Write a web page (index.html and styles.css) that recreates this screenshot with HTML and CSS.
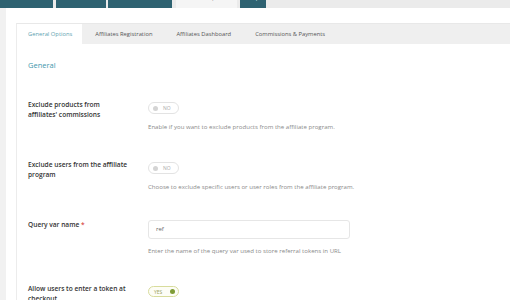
FILE: index.html
```html
<!DOCTYPE html>
<html>
<head>
<meta charset="utf-8">
<link rel="stylesheet" href="styles.css">
</head>
<body>
<nav class="topnav">
  <a class="ttab t1">Dashboard</a>
  <a class="ttab t2">Affiliates</a>
  <a class="ttab t3">Commissions</a>
  <a class="ttab t4 active">General Options</a>
  <a class="ttab t5">Help</a>
</nav>
<div class="wrap">
  <div class="panel">
    <div class="subtabs">
      <span class="stab active">General Options</span>
      <span class="stab">Affiliates Registration</span>
      <span class="stab">Affiliates Dashboard</span>
      <span class="stab">Commissions &amp; Payments</span>
    </div>
    <div class="content">
      <h2 class="heading">General</h2>
      <div class="row">
        <div class="label">Exclude products from affiliates' commissions</div>
        <div class="control">
          <span class="toggle off"><span class="dot"></span><span class="tt">NO</span></span>
          <p class="desc">Enable if you want to exclude products from the affiliate program.</p>
        </div>
      </div>
      <div class="row">
        <div class="label">Exclude users from the affiliate program</div>
        <div class="control">
          <span class="toggle off"><span class="dot"></span><span class="tt">NO</span></span>
          <p class="desc">Choose to exclude specific users or user roles from the affiliate program.</p>
        </div>
      </div>
      <div class="row">
        <div class="label">Query var name <span class="req">*</span></div>
        <div class="control flush">
          <div class="input">ref</div>
          <p class="desc">Enter the name of the query var used to store referral tokens in URL</p>
        </div>
      </div>
      <div class="row">
        <div class="label">Allow users to enter a token at checkout</div>
        <div class="control">
          <span class="toggle on"><span class="tt">YES</span><span class="dot"></span></span>
        </div>
      </div>
    </div>
  </div>
</div>
</body>
</html>
```
FILE: styles.css
```css
* { box-sizing: border-box; }
html, body { margin: 0; padding: 0; }
body {
  background: #f1f1f1;
  font-family: "Open Sans", "Noto Sans", sans-serif;
  color: #333;
  width: 510px;
  height: 300px;
  overflow: hidden;
}
.topnav {
  height: 8px;
  background: #ebebeb;
  display: flex;
  gap: 3px;
  overflow: hidden;
}
.ttab {
  display: block;
  height: 20px;
  margin-top: -12px;
  background: #2e6271;
  color: #dfe8ea;
  font-size: 6px;
  line-height: 20px;
  text-align: center;
  flex: none;
}
.t1 { width: 53px; }
.t2 { width: 50px; }
.t3 { width: 64px; margin-left: -1px; }
.t4 { width: 61px; margin-left: 1px; background: #f5f5f5; color: #999; }
.t5 { width: 26px; }
.wrap {
  margin-left: 6px;
  background: #fff;
  padding: 15px 0 0 10px;
  height: 292px;
}
.panel {
  border-left: 1px solid #ececec;
  border-top: 1px solid #e8e8e8;
  height: 100%;
}
.subtabs {
  display: flex;
  height: 20px;
  background: #efefef;
  align-items: center;
}
.stab {
  padding: 0 11px;
  height: 20px;
  line-height: 20px;
  font-size: 5.8px;
  color: #555;
  white-space: nowrap;
}
.stab.active {
  background: #fff;
  color: #5d9fb0;
  padding: 0 10px 0 11px;
}
.stab + .stab { margin-left: 2px; }
.content {
  padding: 15px 0 0 11px;
}
.heading {
  margin: 0;
  font-size: 7.5px;
  line-height: 12px;
  font-weight: 400;
  color: #3f98ad;
}
.row {
  display: grid;
  grid-template-columns: 120px 1fr;
  margin-top: 29px;
}
.heading + .row { margin-top: 29px; }
.label {
  font-size: 6.6px;
  line-height: 10px;
  font-weight: 600;
  color: #333;
  padding-right: 18px;
}
.req { color: #d9534f; }
.control { padding-top: 2px; }
.control.flush { padding-top: 0; }
.toggle {
  display: flex;
  align-items: center;
  gap: 4px;
  width: 31px;
  height: 12px;
  border-radius: 6px;
  border: 1px solid #e3e3e3;
  padding: 0 4px;
  font-size: 5px;
  color: #aaa;
}
.toggle .dot {
  width: 5px;
  height: 5px;
  border-radius: 50%;
  background: #d4d4d4;
  flex: none;
}
.toggle.off .tt { margin-left: 1px; }
.toggle.on {
  border-color: #d8dc9c;
  background: #fdfdf6;
  color: #9aa25c;
  justify-content: space-between;
  padding: 0 3px 0 5px;
  height: 11px;
}
.toggle.on .dot { background: #7f9c36; }
.desc {
  margin: 8px 0 0;
  font-size: 6.1px;
  line-height: 9px;
  color: #8a8a8a;
  white-space: nowrap;
}
.input {
  width: 202px;
  height: 19px;
  border: 1px solid #e6e6e6;
  border-radius: 3px;
  padding: 0 7px;
  font-size: 6px;
  line-height: 17px;
  color: #666;
}
.flush .desc { margin-top: 7px; }
```
